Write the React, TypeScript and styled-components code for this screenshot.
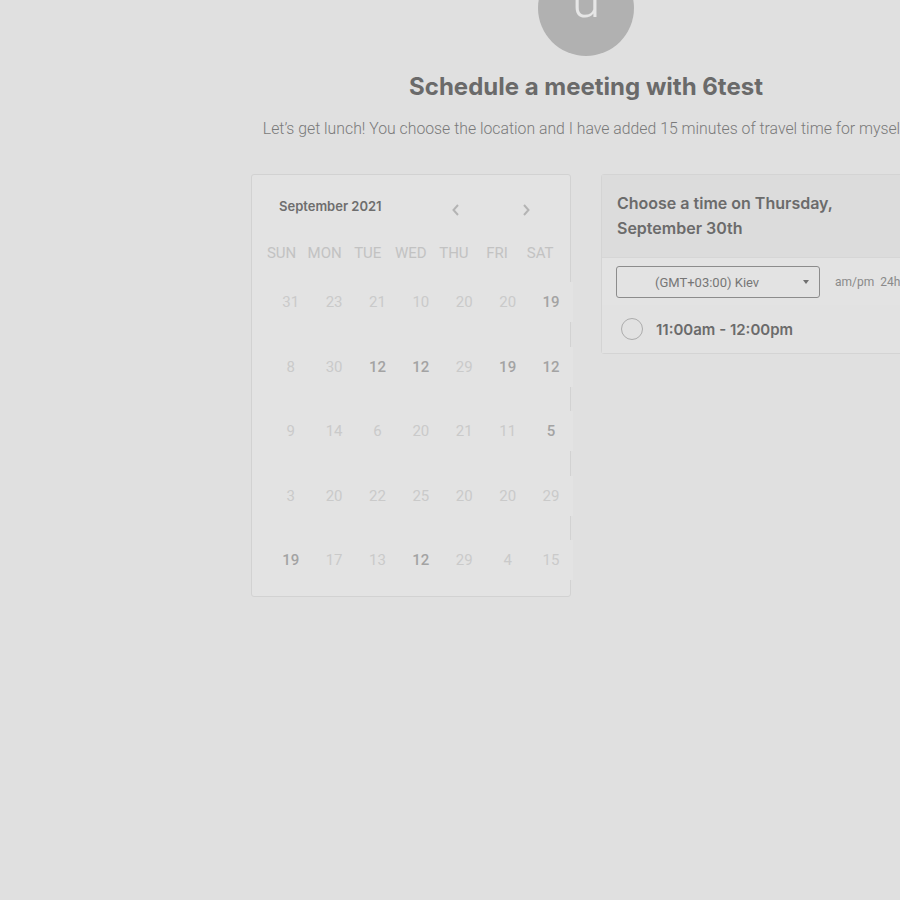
import React from "react";
import styled, { createGlobalStyle } from "styled-components";

const Global = createGlobalStyle`
  html, body { margin: 0; padding: 0; background: #e0e0e0; overflow: hidden; }
  body { width: 900px; height: 900px; }
`;

const Page = styled.div`
  width: 1172px;
  display: flex;
  flex-direction: column;
  align-items: center;
`;

const Avatar = styled.div`
  width: 96px;
  height: 96px;
  margin-top: -40px;
  border-radius: 50%;
  background: #b1b1b1;
  color: #e6e6e6;
  font-family: Roboto, sans-serif;
  font-size: 52px;
  font-weight: 300;
  display: flex;
  align-items: flex-end;
  justify-content: center;
  line-height: 1;
  box-sizing: border-box;
  & > span { margin-bottom: 30px; }
`;

const Title = styled.h1`
  margin: 16px 0 0;
  font-family: Inter, sans-serif;
  font-weight: 700;
  font-size: 24px;
  line-height: 30px;
  color: #6a6a6a;
`;

const Subtitle = styled.p`
  margin: 17px 0 0;
  font-family: Roboto, sans-serif;
  font-weight: 300;
  font-size: 15.8px;
  line-height: 20px;
  color: #7a7a7a;
  white-space: nowrap;
`;

const Main = styled.div`
  margin-top: 35px;
  display: flex;
  gap: 30px;
  align-items: flex-start;
`;

const Calendar = styled.div`
  width: 320px;
  height: 423px;
  box-sizing: border-box;
  border: 1px solid #d2d2d2;
  border-radius: 3px;
  background: #e3e3e3;
  padding: 0;
`;

const CalHeader = styled.div`
  display: flex;
  align-items: center;
  height: 64px;
  padding-left: 27px;
`;

const Month = styled.div`
  font-family: Inter, sans-serif;
  font-weight: 600;
  font-size: 13px;
  color: #6e6e6e;
  width: 168px;
  margin-top: -2px;
`;

const NavBtn = styled.div`
  width: 18px;
  height: 18px;
  display: flex;
  align-items: center;
  justify-content: center;
  margin-top: 5px;
  & + & { margin-left: 52px; }
`;

const WeekRow = styled.div`
  display: grid;
  grid-template-columns: repeat(7, 43.1px);
  height: 28px;
  align-items: center;
  padding-left: 8px;
`;

const WeekDay = styled.div`
  text-align: center;
  font-family: Roboto, sans-serif;
  font-size: 15px;
  color: #c2c2c2;
`;

const Days = styled.div`
  display: grid;
  grid-template-columns: repeat(7, 43.4px);
  grid-auto-rows: 64.5px;
  padding-left: 17px;
  margin-top: 3px;
  margin-right: -3px;
`;

const Day = styled.div<{ $strong?: boolean }>`
  display: flex;
  align-items: center;
  justify-content: center;
  font-family: Roboto, sans-serif;
  font-size: 15px;
  color: ${(p) => (p.$strong ? "#a3a3a3" : "#cacaca")};
  font-weight: ${(p) => (p.$strong ? 500 : 400)};
  & > span {
    display: flex;
    align-items: center;
    justify-content: center;
    width: 100%;
    height: 40px;
    background: #e3e3e3;
  }
`;

const Panel = styled.div`
  width: 320px;
  box-sizing: border-box;
  border: 1px solid #d4d4d4;
  border-radius: 3px;
  background: #e3e3e3;
`;

const PanelHead = styled.div`
  background: #dcdcdc;
  padding: 16px 15px 16px 15px;
  font-family: Inter, sans-serif;
  font-weight: 600;
  font-size: 16px;
  line-height: 25px;
  color: #6b6b6b;
`;

const TzRow = styled.div`
  display: flex;
  align-items: center;
  padding: 8px 14px 7px 14px;
  border-top: 1px solid #d6d6d6;
  gap: 15px;
`;

const Select = styled.div`
  width: 204px;
  height: 32px;
  box-sizing: border-box;
  border: 1px solid #8c8c8c;
  border-radius: 3px;
  display: flex;
  align-items: center;
  padding-left: 38px;
  padding-right: 10px;
  font-family: Roboto, sans-serif;
  font-size: 13px;
  color: #767676;
  & > span { flex: 1; }
`;

const Caret = styled.div`
  width: 0;
  height: 0;
  border-left: 3.5px solid transparent;
  border-right: 3.5px solid transparent;
  border-top: 4px solid #707070;
`;

const Format = styled.div`
  font-family: Roboto, sans-serif;
  font-size: 12px;
  color: #8a8a8a;
  word-spacing: 3px;
  white-space: nowrap;
`;

const Slot = styled.div`
  display: flex;
  align-items: center;
  gap: 13px;
  height: 48px;
  padding-left: 19px;
  background: #e2e2e2;
  font-family: Inter, sans-serif;
  font-weight: 600;
  font-size: 15px;
  color: #6b6b6b;
`;

const Radio = styled.div`
  width: 22px;
  height: 22px;
  border-radius: 50%;
  border: 1.5px solid #acacac;
  box-sizing: border-box;
`;

const Chevron = ({ dir }: { dir: "left" | "right" }) => (
  <svg width="10" height="14" viewBox="0 0 10 14">
    <path
      d={dir === "left" ? "M7 2 L2.5 7 L7 12" : "M3 2 L7.5 7 L3 12"}
      fill="none"
      stroke="#b4b4b4"
      strokeWidth="2"
    />
  </svg>
);

const weekdays = ["SUN", "MON", "TUE", "WED", "THU", "FRI", "SAT"];
const days: [string, boolean][] = [
  ["31", false], ["23", false], ["21", false], ["10", false], ["20", false], ["20", false], ["19", true],
  ["8", false], ["30", false], ["12", true], ["12", true], ["29", false], ["19", true], ["12", true],
  ["9", false], ["14", false], ["6", false], ["20", false], ["21", false], ["11", false], ["5", true],
  ["3", false], ["20", false], ["22", false], ["25", false], ["20", false], ["20", false], ["29", false],
  ["19", true], ["17", false], ["13", false], ["12", true], ["29", false], ["4", false], ["15", false],
];

export default function App() {
  return (
    <>
      <Global />
      <Page>
        <Avatar><span>u</span></Avatar>
        <Title>Schedule a meeting with 6test</Title>
        <Subtitle>
          Let’s get lunch! You choose the location and I have added 15 minutes of travel time for myself.
        </Subtitle>
        <Main>
          <Calendar>
            <CalHeader>
              <Month>September 2021</Month>
              <NavBtn><Chevron dir="left" /></NavBtn>
              <NavBtn><Chevron dir="right" /></NavBtn>
            </CalHeader>
            <WeekRow>
              {weekdays.map((w) => (
                <WeekDay key={w}>{w}</WeekDay>
              ))}
            </WeekRow>
            <Days>
              {days.map(([d, s], i) => (
                <Day key={i} $strong={s}>
                  <span>{d}</span>
                </Day>
              ))}
            </Days>
          </Calendar>
          <Panel>
            <PanelHead>
              Choose a time on Thursday,
              <br />
              September 30th
            </PanelHead>
            <TzRow>
              <Select>
                <span>(GMT+03:00) Kiev</span>
                <Caret />
              </Select>
              <Format>am/pm 24h</Format>
            </TzRow>
            <Slot>
              <Radio />
              11:00am - 12:00pm
            </Slot>
          </Panel>
        </Main>
      </Page>
    </>
  );
}
